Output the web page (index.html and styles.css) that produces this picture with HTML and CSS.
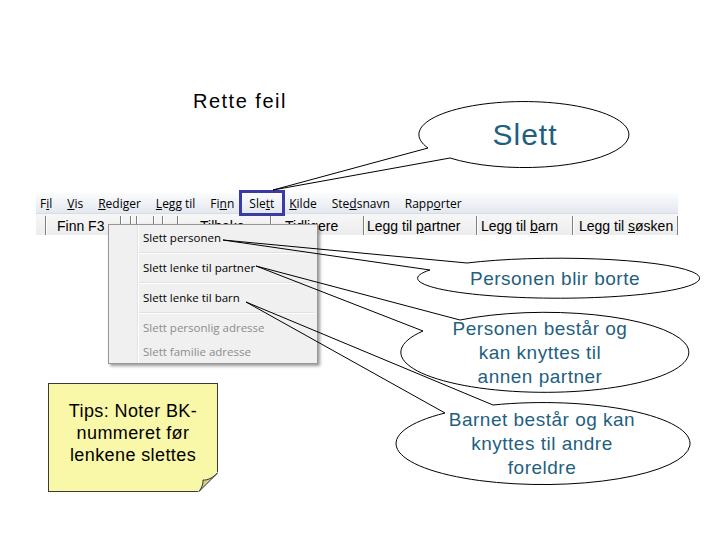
FILE: index.html
```html
<!DOCTYPE html>
<html lang="no">
<head>
    <meta charset="UTF-8">
    <title>Rette feil</title>
    <link rel="stylesheet" href="styles.css">
</head>
<body>
    <div class="slide">
        <h1 class="title">Rette feil</h1>

        <!-- Screenshot of the program menu -->
        <div class="shot">
            <div class="menubar">
                <span class="mi">F<u>i</u>l</span>
                <span class="mi"><u>V</u>is</span>
                <span class="mi"><u>R</u>ediger</span>
                <span class="mi"><u>L</u>egg til</span>
                <span class="mi">Fi<u>n</u>n</span>
                <span class="mi mi-marked">Sle<u>t</u>t</span>
                <span class="mi"><u>K</u>ilde</span>
                <span class="mi">Ste<u>d</u>snavn</span>
                <span class="mi">Rapp<u>o</u>rter</span>
            </div>
            <div class="toolbar">
                <span class="tb tb-find">Finn F3</span>
                <span class="tb tb-w10"></span>
                <span class="tb tb-w6"></span>
                <span class="tb tb-w17"></span>
                <span class="tb tb-w9"></span>
                <span class="tb tb-w15"></span>
                <span class="tb tb-back">Tilbake</span>
                <span class="tb tb-prev">Tidligere</span>
                <span class="tb tb-partner">Legg til <u>p</u>artner</span>
                <span class="tb tb-child">Legg til <u>b</u>arn</span>
                <span class="tb tb-sibling">Legg til <u>s</u>øsken</span>
            </div>

            <div class="dropdown">
                <div class="dd-item">Slett personen</div>
                <div class="dd-sep"></div>
                <div class="dd-item">Slett lenke til partner</div>
                <div class="dd-sep"></div>
                <div class="dd-item">Slett lenke til barn</div>
                <div class="dd-sep"></div>
                <div class="dd-item disabled">Slett personlig adresse</div>
                <div class="dd-item disabled short">Slett familie adresse</div>
            </div>
        </div>

        <!-- Sticky note -->
        <div class="note">
            Tips: Noter BK-<br>nummeret før<br>lenkene slettes
            <svg class="fold" width="20" height="20" viewBox="0 0 20 20">
                <polygon points="19.5,0 20,0 20,20 0,20 0,19.5" fill="#fff"/>
                <path d="M19.5 1 C15 6 9 8.5 5 8 C5.5 12 3.5 16 1 19.5 Z" fill="#d5d28c" stroke="#333" stroke-width="1"/>
            </svg>
        </div>

        <!-- Callout bubbles -->
        <svg class="callouts" width="720" height="540" viewBox="0 0 720 540">
            <path d="M450 158 L273 190 L428 148 A105 33 0 1 1 450 158"/>
            <path d="M430 270 L223 240 L467 263 A141 20 0 1 1 430 270"/>
            <path d="M423 331 L256 266 L460 320 A144 40 0 1 1 423 331"/>
            <path d="M445 413 L246 302 L493 405 A147 41 0 1 1 445 413"/>
        </svg>
        <div class="label label-slett">Slett</div>
        <div class="label label-gone">Personen blir borte</div>
        <div class="label label-partner">Personen består og<br>kan knyttes til<br>annen partner</div>
        <div class="label label-child">Barnet består og kan<br>knyttes til andre<br>foreldre</div>
    </div>
</body>
</html>
```

FILE: styles.css
```css
/* General */
body {
    margin: 0;
    background: #fff;
}

.slide {
    position: relative;
    width: 720px;
    height: 540px;
    padding-top: 89px;
    box-sizing: border-box;
    overflow: hidden;
    font-family: "Liberation Sans", Arial, sans-serif;
    color: #000;
}

.title {
    margin: 0 0 0 193px;
    font-size: 20px;
    font-weight: normal;
    line-height: 24px;
    letter-spacing: 1.5px;
}

/* Screenshot strip */
.shot {
    position: relative;
    width: 642px;
    margin: 80px 0 0 36px;
}

.menubar {
    display: flex;
    height: 20px;
    padding-left: 4px;
    background: linear-gradient(#fbfcfd, #e3e8ef);
    font-family: "Open Sans", sans-serif;
    font-size: 12px;
}

.mi {
    display: flex;
    align-items: center;
    padding: 0 7.5px;
}

.mi:first-child {
    padding-left: 0;
}

.mi-marked {
    outline: 3px solid #3b3ba5;
}

.toolbar {
    display: flex;
    height: 22px;
    padding: 2px 0 0 9px;
    background: linear-gradient(#f7f7f7, #ececec);
    border-top: 1px solid #d9dde3;
    box-sizing: border-box;
    font-size: 14px;
    line-height: 20px;
}

.tb {
    box-sizing: border-box;
    border-left: 1px solid #7f7f7f;
    box-shadow: inset 1px 0 #fff;
    white-space: nowrap;
    overflow: hidden;
}

.tb-find { width: 75px; padding-left: 11px; }
.tb-w10 { width: 10px; }
.tb-w6 { width: 6px; }
.tb-w17 { width: 17px; }
.tb-w9 { width: 9px; }
.tb-w15 { width: 15px; }
.tb-back { width: 93px; padding-left: 22px; }
.tb-prev { width: 93px; padding-left: 14px; }
.tb-partner { width: 113px; padding-left: 3px; }
.tb-child { width: 96px; padding-left: 4px; }
.tb-sibling { width: 106px; padding-left: 6px; border-right: 1px solid #7f7f7f; }

/* Dropdown menu */
.dropdown {
    position: absolute;
    left: 72px;
    top: 31px;
    width: 210px;
    box-sizing: border-box;
    border: 1px solid #979797;
    background: #f0f0f0 linear-gradient(to right, transparent 28px, #e2e3e3 28px, #e2e3e3 29px, #fff 29px, #fff 30px, transparent 30px);
    box-shadow: 2px 2px 3px rgba(0, 0, 0, 0.4);
    font-family: "Open Sans", sans-serif;
    font-size: 11.5px;
}

.dd-item {
    height: 26px;
    line-height: 26px;
    padding-left: 34px;
}

.dd-item.short {
    height: 22px;
    line-height: 22px;
}

.dd-item.disabled {
    color: #8d8d8d;
}

.dd-sep {
    margin: 1px 3px 1px 30px;
    border-top: 1px solid #e0e0e0;
    border-bottom: 1px solid #fff;
}

/* Sticky note */
.note {
    position: relative;
    width: 170px;
    height: 109px;
    margin: 148px 0 0 48px;
    padding-top: 16px;
    box-sizing: border-box;
    border: 1px solid #3a3a3a;
    background: #f9f7a8;
    text-align: center;
    font-size: 18px;
    line-height: 22px;
    letter-spacing: 0.4px;
}

.fold {
    position: absolute;
    right: -1px;
    bottom: -1px;
}

/* Callouts */
.callouts {
    position: absolute;
    left: 0;
    top: 0;
    fill: none;
    stroke: #000;
    stroke-width: 1;
    pointer-events: none;
}

.label {
    position: absolute;
    text-align: center;
    color: #1f5f80;
    font-size: 19px;
    line-height: 24px;
    letter-spacing: 0.5px;
}

.label-slett {
    left: 420px;
    top: 117px;
    width: 210px;
    font-size: 30px;
    line-height: 36px;
    letter-spacing: 1px;
}

.label-gone {
    left: 414px;
    top: 267px;
    width: 282px;
}

.label-partner {
    left: 396px;
    top: 317px;
    width: 288px;
}

.label-child {
    left: 395px;
    top: 408px;
    width: 294px;
}
```
